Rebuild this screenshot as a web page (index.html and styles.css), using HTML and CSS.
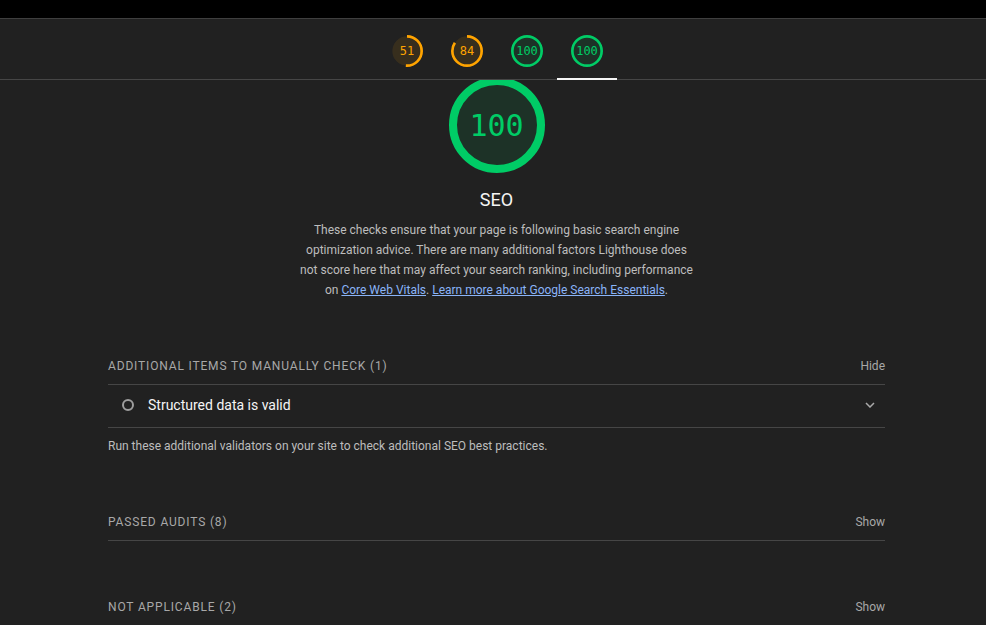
FILE: index.html
```html
<!DOCTYPE html>
<html lang="en">
<head>
<meta charset="utf-8">
<title>Lighthouse SEO</title>
<link rel="stylesheet" href="styles.css">
</head>
<body>
<div class="topbar"></div>
<nav class="sticky">
  <div class="tab">
    <div class="mini-gauge avg">
      <svg viewBox="0 0 120 120"><circle class="base" cx="60" cy="60" r="55"/><circle class="arc" cx="60" cy="60" r="55" stroke-dasharray="176.2 345.6"/></svg>
      <span>51</span>
    </div>
  </div>
  <div class="tab">
    <div class="mini-gauge avg">
      <svg viewBox="0 0 120 120"><circle class="base" cx="60" cy="60" r="55"/><circle class="arc" cx="60" cy="60" r="55" stroke-dasharray="290.3 345.6"/></svg>
      <span>84</span>
    </div>
  </div>
  <div class="tab">
    <div class="mini-gauge pass">
      <svg viewBox="0 0 120 120"><circle class="base" cx="60" cy="60" r="55"/><circle class="arc" cx="60" cy="60" r="55" stroke-dasharray="345.6 345.6"/></svg>
      <span>100</span>
    </div>
  </div>
  <div class="tab active">
    <div class="mini-gauge pass">
      <svg viewBox="0 0 120 120"><circle class="base" cx="60" cy="60" r="55"/><circle class="arc" cx="60" cy="60" r="55" stroke-dasharray="345.6 345.6"/></svg>
      <span>100</span>
    </div>
  </div>
</nav>

<main class="content">
  <header class="cat-header">
    <div class="gauge pass">
      <svg viewBox="0 0 120 120"><circle class="base" cx="60" cy="60" r="55"/><circle class="arc" cx="60" cy="60" r="55" stroke-dasharray="345.6 345.6"/></svg>
      <span>100</span>
    </div>
    <h2 class="cat-title">SEO</h2>
    <p class="cat-desc">These checks ensure that your page is following basic search engine optimization advice. There are many additional factors Lighthouse does not score here that may affect your search ranking, including performance on <a href="#">Core Web Vitals</a>. <a href="#">Learn more about Google Search Essentials</a>.</p>
  </header>

  <section class="clump first">
    <div class="clump-head">
      <span class="clump-title">Additional items to manually check (1)</span>
      <span class="clump-toggle">Hide</span>
    </div>
    <div class="audit">
      <span class="audit-icon"></span>
      <span class="audit-title">Structured data is valid</span>
      <svg class="chevron" viewBox="0 0 10 6"><polyline points="1,1 5,5 9,1"/></svg>
    </div>
    <p class="clump-desc">Run these additional validators on your site to check additional SEO best practices.</p>
  </section>

  <section class="clump passed">
    <div class="clump-head">
      <span class="clump-title">Passed audits (8)</span>
      <span class="clump-toggle">Show</span>
    </div>
  </section>

  <section class="clump na">
    <div class="clump-head">
      <span class="clump-title">Not applicable (2)</span>
      <span class="clump-toggle">Show</span>
    </div>
  </section>
</main>
</body>
</html>
```

FILE: styles.css
```css
* { box-sizing: border-box; }

html, body {
  margin: 0;
  padding: 0;
  background: #212121;
  color: #f5f5f5;
  font-family: Roboto, "Liberation Sans", sans-serif;
  overflow: hidden;
}

.topbar {
  height: 18px;
  background: #000;
}

.sticky {
  position: sticky;
  top: 0;
  z-index: 2;
  display: flex;
  justify-content: center;
  padding-left: 8px;
  height: 62px;
  background: #212121;
  border-top: 1px solid #3f3f3f;
  border-bottom: 1px solid #464646;
}

.tab {
  position: relative;
  width: 60px;
  display: flex;
  justify-content: center;
  padding-top: 16px;
}

.tab.active::after {
  content: "";
  position: absolute;
  left: 0;
  right: 0;
  bottom: -1px;
  height: 2px;
  background: #f5f5f5;
}

.mini-gauge,
.gauge {
  position: relative;
  display: flex;
  align-items: center;
  justify-content: center;
}

.mini-gauge { width: 32px; height: 32px; }
.gauge { width: 96px; height: 96px; }

.mini-gauge svg,
.gauge svg {
  position: absolute;
  inset: 0;
  width: 100%;
  height: 100%;
  transform: rotate(-90deg);
}

.base { stroke: none; }
.arc { fill: none; stroke-width: 10; }

.pass .base { fill: rgba(0, 204, 102, 0.1); }
.pass .arc { stroke: #0c6; }
.pass span { color: #0c6; }

.avg .base { fill: rgba(255, 164, 0, 0.1); }
.avg .arc { stroke: #ffa400; }
.avg span { color: #ffa400; }

.mini-gauge span,
.gauge span {
  position: relative;
  font-family: "DejaVu Sans Mono", "Liberation Mono", monospace;
}

.mini-gauge span { font-size: 12px; }
.gauge span { font-size: 30px; }

.content {
  padding: 0 101px 0 108px;
}

.cat-header {
  display: flex;
  flex-direction: column;
  align-items: center;
}

.cat-header .gauge {
  margin-top: -3px;
}

.cat-title {
  margin: 15px 0 0;
  font-size: 18px;
  line-height: 24px;
  font-weight: 400;
  color: #f5f5f5;
}

.cat-desc {
  margin: 8px 0 0;
  max-width: 400px;
  text-align: center;
  font-size: 12px;
  line-height: 20px;
  color: #bdbdbd;
}

.cat-desc a {
  color: #8ab4f8;
  text-decoration: underline;
}

.clump.first { margin-top: 58px; }
.clump.passed { margin-top: 60px; }
.clump.na { margin-top: 58px; }

.clump-head {
  display: flex;
  justify-content: space-between;
  align-items: center;
  padding-bottom: 10px;
  border-bottom: 1px solid #464646;
  font-size: 12px;
  line-height: 16px;
  color: #a8a8a8;
}

.clump.na .clump-head { border-bottom: none; }

.clump-title {
  text-transform: uppercase;
  letter-spacing: 0.07em;
}

.audit {
  display: flex;
  align-items: center;
  padding: 10px 10px 12px 14px;
  border-bottom: 1px solid #464646;
}

.audit-icon {
  width: 12px;
  height: 12px;
  border-radius: 50%;
  border: 2px solid #9e9e9e;
  margin-right: 14px;
}

.audit-title {
  flex: 1;
  font-size: 14px;
  line-height: 20px;
  color: #f5f5f5;
}

.chevron {
  width: 10px;
  height: 6px;
  fill: none;
  stroke: #aaa;
  stroke-width: 1.5;
}

.clump-desc {
  margin: 10px 0 0;
  font-size: 12px;
  line-height: 16px;
  color: #bdbdbd;
}
```
